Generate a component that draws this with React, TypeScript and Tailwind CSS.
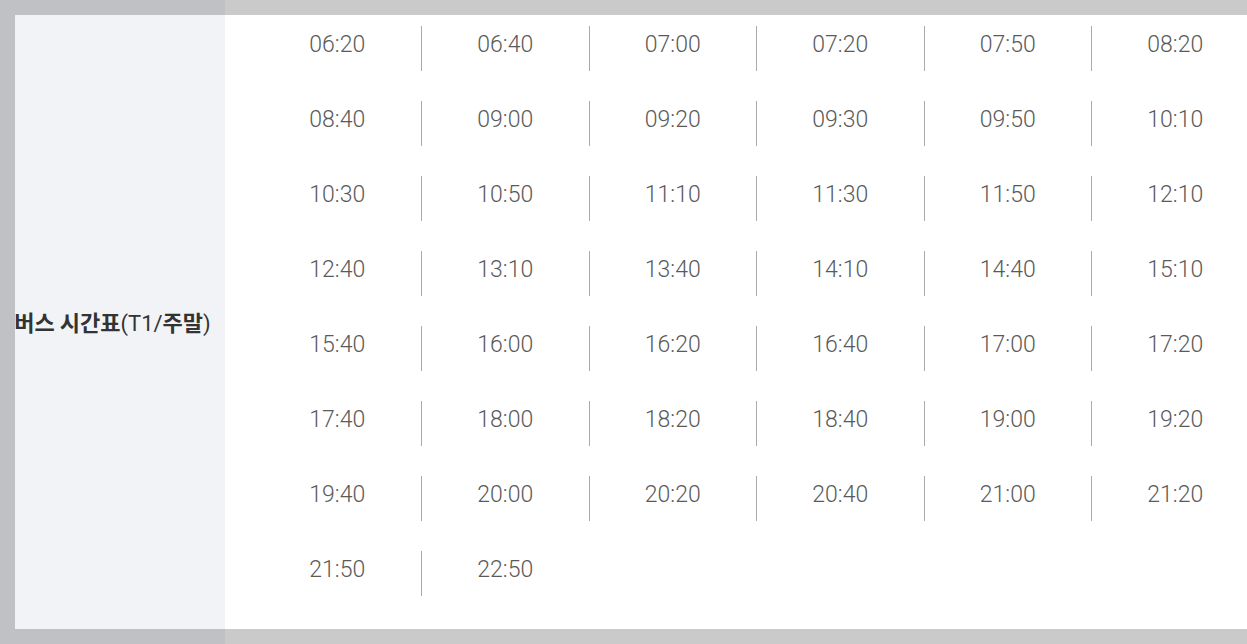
import React from "react";

const times = [
  "06:20", "06:40", "07:00", "07:20", "07:50", "08:20",
  "08:40", "09:00", "09:20", "09:30", "09:50", "10:10",
  "10:30", "10:50", "11:10", "11:30", "11:50", "12:10",
  "12:40", "13:10", "13:40", "14:10", "14:40", "15:10",
  "15:40", "16:00", "16:20", "16:40", "17:00", "17:20",
  "17:40", "18:00", "18:20", "18:40", "19:00", "19:20",
  "19:40", "20:00", "20:20", "20:40", "21:00", "21:20",
  "21:50", "22:50",
];

export default function App() {
  return (
    <div className="flex h-[644px] w-[1247px] overflow-hidden font-['Roboto',sans-serif]">
      <div className="grid w-[225px] shrink-0 bg-[#c0c1c5]">
        <div className="col-start-1 row-start-1 mb-[15px] ml-[15px] mt-[15px] bg-[#f2f3f7]" />
        <div className="col-start-1 row-start-1 flex items-center justify-center whitespace-nowrap text-[22px] leading-none text-[#333]">
          <p>
            <span className="font-['Noto_Sans_CJK_KR',sans-serif] font-bold">버스 시간표</span>
            <span className="font-['Roboto',sans-serif] font-normal">(T1/</span>
            <span className="font-['Noto_Sans_CJK_KR',sans-serif] font-bold">주말</span>
            <span className="font-['Roboto',sans-serif] font-normal">)</span>
          </p>
        </div>
      </div>
      <div className="flex-1 bg-[#cacaca] pb-[15px] pr-[15px] pt-[15px]">
        <div className="h-full overflow-hidden bg-white pl-[28.5px] pt-[11px]">
          <ul className="grid grid-cols-[repeat(6,167.5px)] gap-y-[30px]">
            {times.map((t, i) => (
              <li
                key={t}
                className={
                  "flex h-[45px] justify-center pt-[7px] text-[23px] font-light leading-[23px] text-[#5a5a5a]" +
                  (i % 6 !== 0 ? " border-l border-[#aaaaaa]" : "")
                }
              >
                {t}
              </li>
            ))}
          </ul>
        </div>
      </div>
    </div>
  );
}
